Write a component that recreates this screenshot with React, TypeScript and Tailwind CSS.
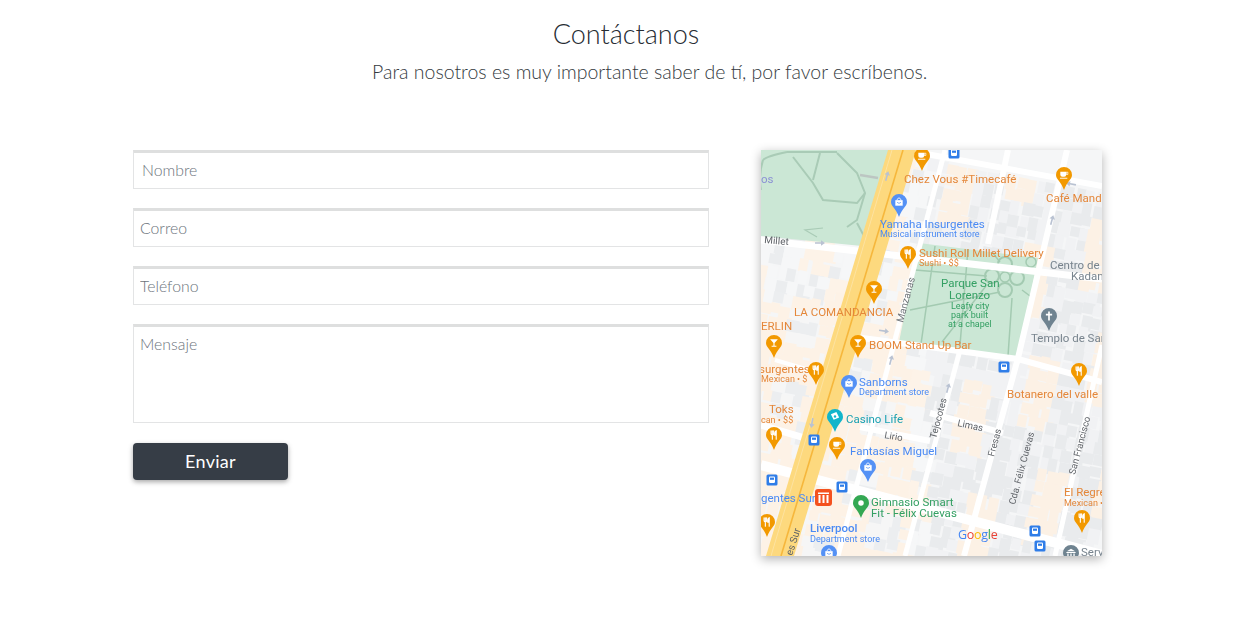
import React from 'react';

const ORANGE = '#f29900';
const BLUE = '#5491f5';
const LABEL_ORANGE = '#e4873a';
const LABEL_BLUE = '#4a8af4';
const LABEL_GREEN = '#34a063';
const LABEL_GRAY = '#78848e';

type Glyph = 'fork' | 'glass' | 'cup' | 'bag' | 'cross' | 'dot' | 'casino' | 'serv';

const GlyphShape = ({ kind }: { kind: Glyph }) => {
  if (kind === 'fork') {
    return (
      <g stroke="#fff" strokeWidth="1.2" fill="none" strokeLinecap="round">
        <path d="M-3.2 -4.5v3a1.4 1.4 0 0 0 2.8 0v-3M-1.8 -4.5v9" />
        <path d="M2.4 4.5v-9c-1.4 .6-1.8 2.5-1.6 4.6h1.6" fill="#fff" />
      </g>
    );
  }
  if (kind === 'glass') {
    return (
      <g fill="#fff">
        <path d="M-4.2 -4.2h8.4l-3.6 4.2v3h2v1.2h-5.2v-1.2h2v-3z" />
      </g>
    );
  }
  if (kind === 'cup') {
    return (
      <g fill="#fff">
        <path d="M-4 -3.4h6.4v3.2a2.2 2.2 0 0 1-2.2 2.2h-2a2.2 2.2 0 0 1-2.2-2.2z" />
        <path d="M2.4 -3h1.8v2.4h-1.8z" fill="none" stroke="#fff" strokeWidth=".8" />
        <path d="M-4.4 3h8v1h-8z" />
      </g>
    );
  }
  if (kind === 'bag') {
    return (
      <g>
        <path d="M-4 -2h8v6h-8z" fill="#fff" />
        <path d="M-2 -2c0-3 4-3 4 0" fill="none" stroke="#fff" strokeWidth="1" />
        <path d="M-2 0c.5 1.800 3.500 1.800 4 0" fill="none" stroke={BLUE} strokeWidth=".8" />
      </g>
    );
  }
  if (kind === 'cross') {
    return <path d="M-.9 -5h1.800v2.600h2.500v1.800h-2.500v5.600h-1.800v-5.600h-2.500v-1.800h2.500z" fill="#fff" />;
  }
  if (kind === 'casino') {
    return (
      <g>
        <path d="M-4.500 -3l6 -2.500 3 6 -6 2.500z" fill="#fff" />
        <circle cx="0" cy="-.5" r="1.300" fill="#12b5cb" />
      </g>
    );
  }
  if (kind === 'serv') {
    return <path d="M-5 -1h10v1h-10zM-4 .5h1.400v3h-1.400zM-.7 .5h1.400v3h-1.400zM2.600 .5h1.400v3h-1.400zM-4.500 -2l4.500 -2.500 4.500 2.500z" fill="#fff" />;
  }
  return <circle cx="0" cy="0" r="3" fill="#fff" />;
};

const Pin = ({ x, y, color, kind, r = 8 }: { x: number; y: number; color: string; kind: Glyph; r?: number }) => (
  <g transform={`translate(${x} ${y})`}>
    <path
      d={`M${-r} 0a${r} ${r} 0 1 1 ${r * 2} 0c0 4.500-4.800 6-${r} 15c-3.200-9-${r}-10.500-${r}-15z`}
      fill={color}
    />
    <g transform="scale(.92)">
      <GlyphShape kind={kind} />
    </g>
  </g>
);

const Bus = ({ x, y }: { x: number; y: number }) => (
  <g transform={`translate(${x} ${y})`}>
    <rect x="-5.500" y="-5.500" width="11" height="11" rx="1.500" fill="#2f7de8" />
    <rect x="-3" y="-3.500" width="6" height="6.500" rx="1.200" fill="#fff" />
    <rect x="-2" y="-2.400" width="4" height="2.200" fill="#2f7de8" />
  </g>
);

const Arrow = ({ x, y, angle }: { x: number; y: number; angle: number }) => (
  <path
    transform={`translate(${x} ${y}) rotate(${angle})`}
    d="M-5 -.8h6v-2l4 2.800-4 2.800v-2h-6z"
    fill="#b9c2d2"
  />
);

// edificios: reticula inclinada, el color va por zonas para que salgan manchas y no un tablero
const buildings = (() => {
  const out: { x: number; y: number; w: number; h: number; fill: string }[] = [];
  for (let row = -2; row < 36; row++) {
    for (let col = -10; col < 40; col++) {
      const seed = (row * 73 + col * 137 + row * col * 11 + 1000) % 97;
      const x = 761 + col * 10 + row * -2.6 + (seed % 4);
      const y = 150 + row * 12 + col * 2 + (seed % 3);
      const w = 9 + (seed % 6);
      const h = 10 + (seed % 7);
      const zone = (Math.floor(col / 3) * 5 + Math.floor(row / 3) * 3 + 40) % 7;
      const leftSide = x < 905 && y > 290;
      let fill = '#f4f5f6';
      if (x > 925) {
        fill = zone === 0 || zone === 4 ? '#fcf1e5' : seed < 60 ? '#e9ebed' : '#f1f2f4';
      } else if (leftSide) {
        fill = zone < 5 ? '#fdf2e6' : seed < 50 ? '#eceef0' : '#f6f6f6';
      } else {
        fill = zone < 2 ? '#fdf3e8' : seed < 30 ? '#ebedef' : '#f6f7f8';
      }
      out.push({ x, y, w, h, fill });
    }
  }
  return out;
})();

const T = ({
  x,
  y,
  fill,
  size = 11.500,
  rotate,
  weight,
  children,
}: {
  x: number;
  y: number;
  fill: string;
  size?: number;
  rotate?: number;
  weight?: number;
  children: React.ReactNode;
}) => (
  <text
    x={x}
    y={y}
    fill={fill}
    fontSize={size}
    fontWeight={weight}
    fontFamily="Roboto, sans-serif"
    transform={rotate !== undefined ? `rotate(${rotate} ${x} ${y})` : undefined}
  >
    {children}
  </text>
);

const MapDrawing = () => (
  <svg viewBox="761 150 341 406" className="block w-full h-full blur-[0.5px]">
    <rect x="761" y="150" width="341" height="406" fill="#f5f6f7" />
    {buildings.map((b, i) => (
      <rect
        key={i}
        x={b.x}
        y={b.y}
        width={b.w}
        height={b.h}
        fill={b.fill}
        transform={`rotate(11 ${b.x} ${b.y})`}
      />
    ))}

    {/* parques */}
    <path d="M761 150H890L862 246 761 236z" fill="#cbe7d5" />
    <g fill="none" stroke="#a9cbb6" strokeWidth="2">
      <path d="M787 152c-10 2-20 4-24 8M763 160c-3 10-4 20-2 30" />
      <path d="M793 157l20 26 10 17 34 3 8-10-8-20-20-20" />
      <path d="M820 153l-7 27M787 152h50" />
      <path d="M865 193l-8 27-10 7M857 223l8 15" />
      <path d="M823 228l-18 2 12 7" strokeWidth="1.200" />
      <path d="M860 175l18 3" strokeWidth="2.500" stroke="#bcc6c2" />
    </g>
    <path d="M919 243L1038 258 1018 358 899 342z" fill="#cbe7d5" />
    <g fill="none" stroke="#a3cab1" strokeWidth="1.500">
      <circle cx="1005" cy="277" r="5" />
      <circle cx="1005" cy="264" r="7" strokeWidth="2" />
      <circle cx="1017" cy="278" r="7" strokeWidth="2" />
      <circle cx="1005" cy="290" r="7" strokeWidth="2" />
      <circle cx="992" cy="276" r="7" strokeWidth="2" />
      <circle cx="1031" cy="262" r="5" />
      <path d="M915 270l72 6M910 310l90-18M1012 298l-4 58M986 286l-44 56M1000 262l-8 -10M968 249l-8 96M935 246l-14 98M1022 290l8 6" />
    </g>

    {/* calles */}
    <g stroke="#fff" fill="none" strokeLinecap="butt">
      <path d="M761 240L1102 279" strokeWidth="7" />
      <path d="M910 151L1102 186" strokeWidth="6" />
      <path d="M1008 150L988 244" strokeWidth="6" />
      <path d="M945 150L838 556" strokeWidth="5" />
      <path d="M1067 150L1018 358 964 556" strokeWidth="6" />
      <path d="M1102 345L1055 556" strokeWidth="5" />
      <path d="M960 350L905 556" strokeWidth="5" />
      <path d="M855 337L1018 359 1102 382" strokeWidth="6" />
      <path d="M761 425L815 441" strokeWidth="7" />
      <path d="M860 427L930 441M930 413L1003 433" strokeWidth="6" />
      <path d="M761 465L1102 555" strokeWidth="10" />
      <path d="M775 360L816 372" strokeWidth="4" />
    </g>

    {/* avenida */}
    <path d="M888 150H916L794 556H766z" fill="#fdd97e" />
    <path d="M903 150L781 556" stroke="#f6b73c" strokeWidth="1.600" fill="none" />
    <path d="M892 150L771 556" stroke="#fce5a9" strokeWidth=".8" fill="none" />

    <Arrow x={887} y={176} angle={-75} />
    <Arrow x={820} y={243} angle={0} />
    <Arrow x={1071} y={184} angle={190} />
    <Arrow x={884} y={331} angle={8} />
    <Arrow x={1052} y={220} angle={-75} />
    <Arrow x={891} y={360} angle={-75} />
    <Arrow x={812} y={423} angle={100} />
    <Arrow x={948} y={388} angle={-75} />

    <T x={761} y={183} fill="#8a90d4">os</T>
    <T x={904} y={183} fill={LABEL_ORANGE}>Chez Vous #Timecafé</T>
    <T x={1046} y={202} fill={LABEL_ORANGE}>Café Mand</T>
    <T x={880} y={228} fill={LABEL_BLUE}>Yamaha Insurgentes</T>
    <T x={880} y={237} fill={LABEL_BLUE} size={9}>Musical instrument store</T>
    <T x={919} y={257} fill={LABEL_ORANGE}>Sushi Roll Millet Delivery</T>
    <T x={919} y={266} fill={LABEL_ORANGE} size={9}>Sushi • $$</T>
    <T x={764} y={243} fill="#5f6368" size={10} rotate={5}>Millet</T>
    <T x={1050} y={269} fill={LABEL_GRAY}>Centro de</T>
    <T x={1071} y={280} fill={LABEL_GRAY}>Kadan</T>
    <T x={941} y={287} fill={LABEL_GREEN}>Parque San</T>
    <T x={949} y={299} fill={LABEL_GREEN}>Lorenzo</T>
    <T x={951} y={309} fill={LABEL_GREEN} size={9}>Leafy city</T>
    <T x={951} y={318} fill={LABEL_GREEN} size={9}>park built</T>
    <T x={948} y={327} fill={LABEL_GREEN} size={9}>at a chapel</T>
    <T x={794} y={316} fill={LABEL_ORANGE}>LA COMANDANCIA</T>
    <T x={903} y={323} fill="#70757a" size={10} rotate={-75}>Manzanas</T>
    <T x={761} y={330} fill={LABEL_ORANGE}>ERLIN</T>
    <T x={869} y={349} fill={LABEL_ORANGE}>BOOM Stand Up Bar</T>
    <T x={1031} y={342} fill={LABEL_GRAY}>Templo de San</T>
    <T x={759} y={373} fill={LABEL_ORANGE}>surgentes</T>
    <T x={761} y={382} fill={LABEL_ORANGE} size={9}>Mexican • $</T>
    <T x={859} y={386} fill={LABEL_BLUE}>Sanborns</T>
    <T x={859} y={395} fill={LABEL_BLUE} size={9}>Department store</T>
    <T x={769} y={413} fill={LABEL_ORANGE}>Toks</T>
    <T x={761} y={423} fill={LABEL_ORANGE} size={9}>can • $$</T>
    <T x={846} y={423} fill="#1aa1b2">Casino Life</T>
    <T x={884} y={438} fill="#5f6368" size={9.500} rotate={10}>Lirio</T>
    <T x={850} y={455} fill={LABEL_BLUE}>Fantasías Miguel</T>
    <T x={1007} y={398} fill={LABEL_ORANGE}>Botanero del valle</T>
    <T x={957} y={426} fill="#5f6368" size={9.500} rotate={12}>Limas</T>
    <T x={936} y={439} fill="#5f6368" size={9.500} rotate={-75}>Tejocotes</T>
    <T x={994} y={457} fill="#5f6368" size={9.500} rotate={-75}>Fresas</T>
    <T x={1015} y={505} fill="#5f6368" size={9.500} rotate={-75}>Cda. Félix Cuevas</T>
    <T x={1075} y={475} fill="#5f6368" size={9.500} rotate={-75}>San Francisco</T>
    <T x={1064} y={496} fill={LABEL_ORANGE}>El Regre</T>
    <T x={1064} y={506} fill={LABEL_ORANGE} size={9}>Mexican •</T>
    <T x={871} y={506} fill={LABEL_GREEN}>Gimnasio Smart</T>
    <T x={871} y={517} fill={LABEL_GREEN}>Fit - Félix Cuevas</T>
    <T x={761} y={502} fill={LABEL_BLUE}>gentes Sur</T>
    <T x={810} y={532} fill={LABEL_BLUE} weight={500}>Liverpool</T>
    <T x={810} y={542} fill={LABEL_BLUE} size={9}>Department store</T>
    <T x={792} y={556} fill="#5f6368" size={10} rotate={-72}>es Sur</T>
    <T x={1081} y={556} fill={LABEL_GRAY}>Serv</T>

    <text x={958} y={539} fontSize={12.500} letterSpacing="-.3" fontFamily="'Open Sans', sans-serif">
      <tspan fill="#4285f4">G</tspan>
      <tspan fill="#ea4335">o</tspan>
      <tspan fill="#fbbc05">o</tspan>
      <tspan fill="#4285f4">g</tspan>
      <tspan fill="#34a853">l</tspan>
      <tspan fill="#ea4335">e</tspan>
    </text>

    <Pin x={922} y={156} color={ORANGE} kind="cup" />
    <Pin x={1064} y={175} color={ORANGE} kind="cup" />
    <Pin x={899} y={202} color={BLUE} kind="bag" />
    <Pin x={908} y={254} color={ORANGE} kind="fork" />
    <Pin x={874} y={289} color={ORANGE} kind="glass" />
    <Pin x={774} y={343} color={ORANGE} kind="glass" />
    <Pin x={858} y={343} color={ORANGE} kind="glass" />
    <Pin x={1049} y={316} color="#6f8390" kind="cross" />
    <Pin x={816} y={370} color={ORANGE} kind="fork" />
    <Pin x={849} y={383} color={BLUE} kind="bag" />
    <Pin x={835} y={417} color="#12b5cb" kind="casino" />
    <Pin x={774} y={435} color={ORANGE} kind="fork" />
    <Pin x={837} y={445} color={ORANGE} kind="cup" />
    <Pin x={868} y={467} color={BLUE} kind="bag" />
    <Pin x={861} y={503} color="#34a853" kind="dot" />
    <Pin x={767} y={522} color={ORANGE} kind="fork" />
    <Pin x={829} y={553} color={BLUE} kind="bag" />
    <Pin x={1079} y={371} color={ORANGE} kind="fork" />
    <Pin x={1082} y={518} color={ORANGE} kind="fork" />
    <Pin x={1071} y={553} color="#6f8390" kind="serv" />

    <Bus x={954} y={153} />
    <Bus x={1004} y={367} />
    <Bus x={814} y={440} />
    <Bus x={772} y={480} />
    <Bus x={842} y={487} />
    <Bus x={1035} y={531} />
    <Bus x={1040} y={546} />

    <rect x="815" y="489" width="17" height="17" rx="3" fill="#f4511e" />
    <path d="M818 492.500h11v1.500h-11zM818.500 495h2v8h-2zM822.500 495h2v8h-2zM826.500 495h2v8h-2z" fill="#fff" />
  </svg>
);

const fieldClass =
  "block w-full h-[39px] bg-white border border-t-[3px] border-[#e3e4e5] border-t-[#dedfdf] font-light text-[15.8px] text-[#495057] outline-none placeholder:text-[#6c747c]";

export default function App() {
  return (
    <div className="min-h-[641px] bg-white font-['Lato','Noto_Sans',sans-serif]">
      <div className="pt-[14px]">
        <h1 className="w-[1252px] text-center h-[40px] font-light text-[27px] leading-[40px] text-[#262c33]">Contáctanos</h1>
        <p className="mt-[3px] ml-[372px] font-light text-[19.5px] leading-[30px] text-[#343a40] whitespace-nowrap">
          Para nosotros es muy importante saber de tí, por favor escríbenos.
        </p>
      </div>

      <div className="flex items-start mt-[63px] pl-[133px]">
        <form className="w-[576px]">
          <input className={`${fieldClass} pl-[8px] pb-[3px]`} placeholder="Nombre" />
          <input className={`${fieldClass} mt-[19px] pl-[6px] pb-[3px]`} placeholder="Correo" />
          <input className={`${fieldClass} mt-[19px] pl-[6px] pb-[3px]`} placeholder="Teléfono" />
          <textarea
            className={`${fieldClass} mt-[19px] !h-[99px] pl-[6px] pt-[5px] resize-none`}
            placeholder="Mensaje"
          />
          <button
            type="button"
            className="block mt-[20px] w-[155px] h-[37px] rounded-[4px] bg-[#363d46] text-white text-[18px] tracking-[0.3px] shadow-[0_2px_5px_rgba(0,0,0,0.35)]"
          >
            Enviar
          </button>
        </form>

        <div className="ml-[52px] w-[341px] h-[406px] overflow-hidden shadow-[0_3px_10px_rgba(0,0,0,0.3)]">
          <MapDrawing />
        </div>
      </div>
    </div>
  );
}
